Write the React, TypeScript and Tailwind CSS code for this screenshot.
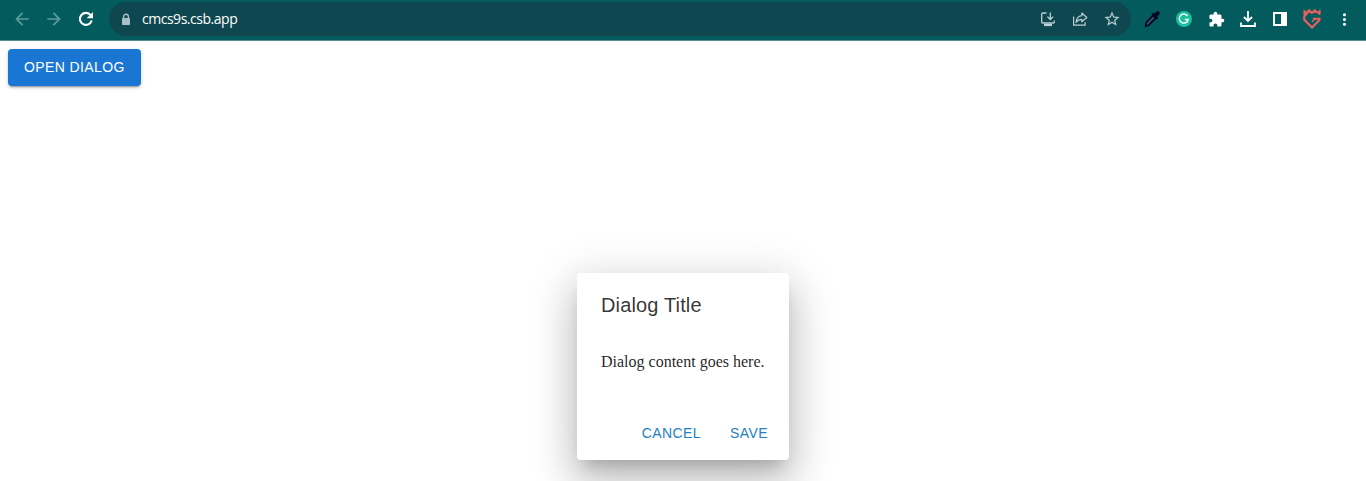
import type { ReactNode } from "react";
import { MdExtension, MdStarBorder, MdArrowBack, MdArrowForward, MdMoreVert } from "react-icons/md";

function Slot({ children, className = "" }: { children: ReactNode; className?: string }) {
  return <span className={`flex h-8 w-8 shrink-0 items-center justify-center ${className}`}>{children}</span>;
}

function ReloadIcon() {
  return (
    <svg width="16" height="16" viewBox="0 0 16 16" fill="none">
      <path d="M12.700 4.200A6 6 0 1 0 13.700 9.500" stroke="currentColor" strokeWidth="2.100" />
      <path d="M15 1v6.300H8.700z" fill="currentColor" />
    </svg>
  );
}

function LockIcon() {
  return (
    <svg width="10" height="13" viewBox="0 0 10 13" fill="none" className="shrink-0">
      <path d="M2.600 6V3.600a2.400 2.400 0 0 1 4.800 0V6" stroke="currentColor" strokeWidth="1.400" />
      <rect x="1" y="5" width="8" height="7" rx="0.800" fill="currentColor" />
    </svg>
  );
}

function InstallIcon() {
  return (
    <svg width="16" height="16" viewBox="0 0 16 16" fill="none" stroke="currentColor" strokeWidth="1.3">
      <path d="M6.500 2H2.600Q1.700 2 1.700 3v8q0 1 1 1h10.600q1 0 1-1V9.500" />
      <path d="M10.300 1.500v6.500M7.400 5.600l2.900 2.900 2.900-2.900" />
      <path d="M4 14h8" strokeWidth="2.200" />
    </svg>
  );
}

function ShareIcon() {
  return (
    <svg width="16" height="16" viewBox="0 0 16 16" fill="none" stroke="currentColor" strokeWidth="1.2" strokeLinejoin="round">
      <path d="M1.600 5.500v8.700h11.500v-3" />
      <path d="M9.800 2l5 4.500-5 4.300V8.300C7.500 8.300 5.600 9.200 4 11.300 4.300 7.500 6.500 5 9.800 4.600z" />
    </svg>
  );
}

function DropperIcon() {
  return (
    <svg width="18" height="18" viewBox="0 0 18 18">
      <path d="M10 5.500l2.700 2.700-7 7-3 .8.600-3.500z" fill="#34506f" stroke="#050624" strokeWidth="1.700" />
      <path d="M8.500 4l1.500-1.300 1.300 1 1.900-2q1.700-1.200 3 0 1.200 1.400 0 3l-1.900 1.900 1 1.300-1.400 1.400z" fill="#050624" />
    </svg>
  );
}

function DownloadIcon() {
  return (
    <svg width="16" height="16" viewBox="0 0 16 16" fill="none" stroke="currentColor" strokeWidth="1.800">
      <path d="M8 0v9.800M3.900 6L8 10l4.100-4M1 11.500V15h14v-3.500" />
    </svg>
  );
}

function CrestIcon() {
  return (
    <svg width="20" height="22" viewBox="0 0 20 22" fill="none" stroke="#e9605f">
      <path d="M1.500 1.500l3.300 2L7 .8l3 2.700L13 .8l2.200 2.700 3.300-2V6l-3.300-.5L13 4.500 10 6 7 4.500 4.800 6 1.500 7z" fill="#e9605f" stroke="none" />
      <path d="M5.500 5L2.300 8.200v3.600L10 19.500l7.500-7.500V10.700H11" strokeWidth="2.100" />
      <path d="M17.500 4v3" strokeWidth="1.800" />
      <path d="M12.800 11L10 13.800" strokeWidth="1.500" />
    </svg>
  );
}

export default function App() {
  return (
    <div className="flex h-[481px] w-full flex-col overflow-hidden bg-white font-['Liberation_Sans',Arial,sans-serif]">
      <header className="flex h-[41px] shrink-0 items-start border-b border-[#50908f] bg-[#045b5e] text-white">
        <nav className="flex h-[38px] w-[109px] items-center pl-[6px] text-[#5d9d9c]">
          <Slot><MdArrowBack size={20} /></Slot>
          <Slot><MdArrowForward size={20} /></Slot>
          <Slot className="text-white"><ReloadIcon /></Slot>
        </nav>
        <div className="mt-[2px] flex h-[34px] w-[1022px] items-center rounded-full bg-[#0e474f] pr-[3px] pl-[12px] text-[#a8bfc5]">
          <LockIcon />
          <span className="ml-[11px] flex-1 font-['Open_Sans',sans-serif] text-[14px] leading-5 tracking-[-0.48px] text-white">cmcs9s.csb.app</span>
          <div className="flex text-[#b9d0d4]">
            <Slot><InstallIcon /></Slot>
            <Slot><ShareIcon /></Slot>
            <Slot><MdStarBorder size={18} /></Slot>
          </div>
        </div>
        <div className="flex h-[38px] items-center pl-[5px]">
          <Slot><DropperIcon /></Slot>
          <Slot>
            <svg width="16" height="16" viewBox="0 0 16 16" fill="none">
              <circle cx="8" cy="8" r="8" fill="#1bbf9c" />
              <path d="M11.500 5A4.500 4.500 0 1 0 12.200 8.500H8.800M11.500 11.500v-3" stroke="white" strokeWidth="1.400" />
            </svg>
          </Slot>
          <Slot><MdExtension size={17} /></Slot>
          <Slot><DownloadIcon /></Slot>
          <Slot>
            <svg width="14" height="14" viewBox="0 0 14 14"><path d="M0 0h14v14H0zM2 2v10h6V2z" fill="white" fillRule="evenodd" /></svg>
          </Slot>
          <Slot><CrestIcon /></Slot>
          <Slot><MdMoreVert size={19} /></Slot>
        </div>
      </header>
      <main className="flex flex-1 flex-col items-start pt-2">
        <button className="ml-2 h-[36.5px] rounded bg-[#1976d2] px-4 py-1.5 text-[14px] leading-[24.5px] tracking-[0.4px] text-white shadow-[0_3px_1px_-2px_rgba(0,0,0,0.2),0_2px_2px_0_rgba(0,0,0,0.14),0_1px_5px_0_rgba(0,0,0,0.12)]">OPEN DIALOG</button>
        <section role="dialog" className="mt-[187.5px] flex w-[212px] flex-col self-center rounded bg-white shadow-[0_11px_15px_-7px_rgba(0,0,0,0.2),0_24px_38px_3px_rgba(0,0,0,0.14),0_9px_46px_8px_rgba(0,0,0,0.12)]">
          <h2 className="px-6 py-4 text-[20px] leading-8 tracking-[0.15px] text-black/80">Dialog Title</h2>
          <div className="px-6 pb-5">
            <p className="my-4 font-['Liberation_Serif',serif] text-[16px] leading-[18px] whitespace-nowrap text-black/87">Dialog content goes here.</p>
          </div>
          <div className="flex justify-end gap-2 p-2 text-[14px] leading-[24.5px] tracking-[0.4px] text-[#2480c4]">
            <button className="min-w-16 px-2 py-1.5">CANCEL</button>
            <button className="min-w-16 px-2 py-1.5">SAVE</button>
          </div>
        </section>
      </main>
    </div>
  );
}
